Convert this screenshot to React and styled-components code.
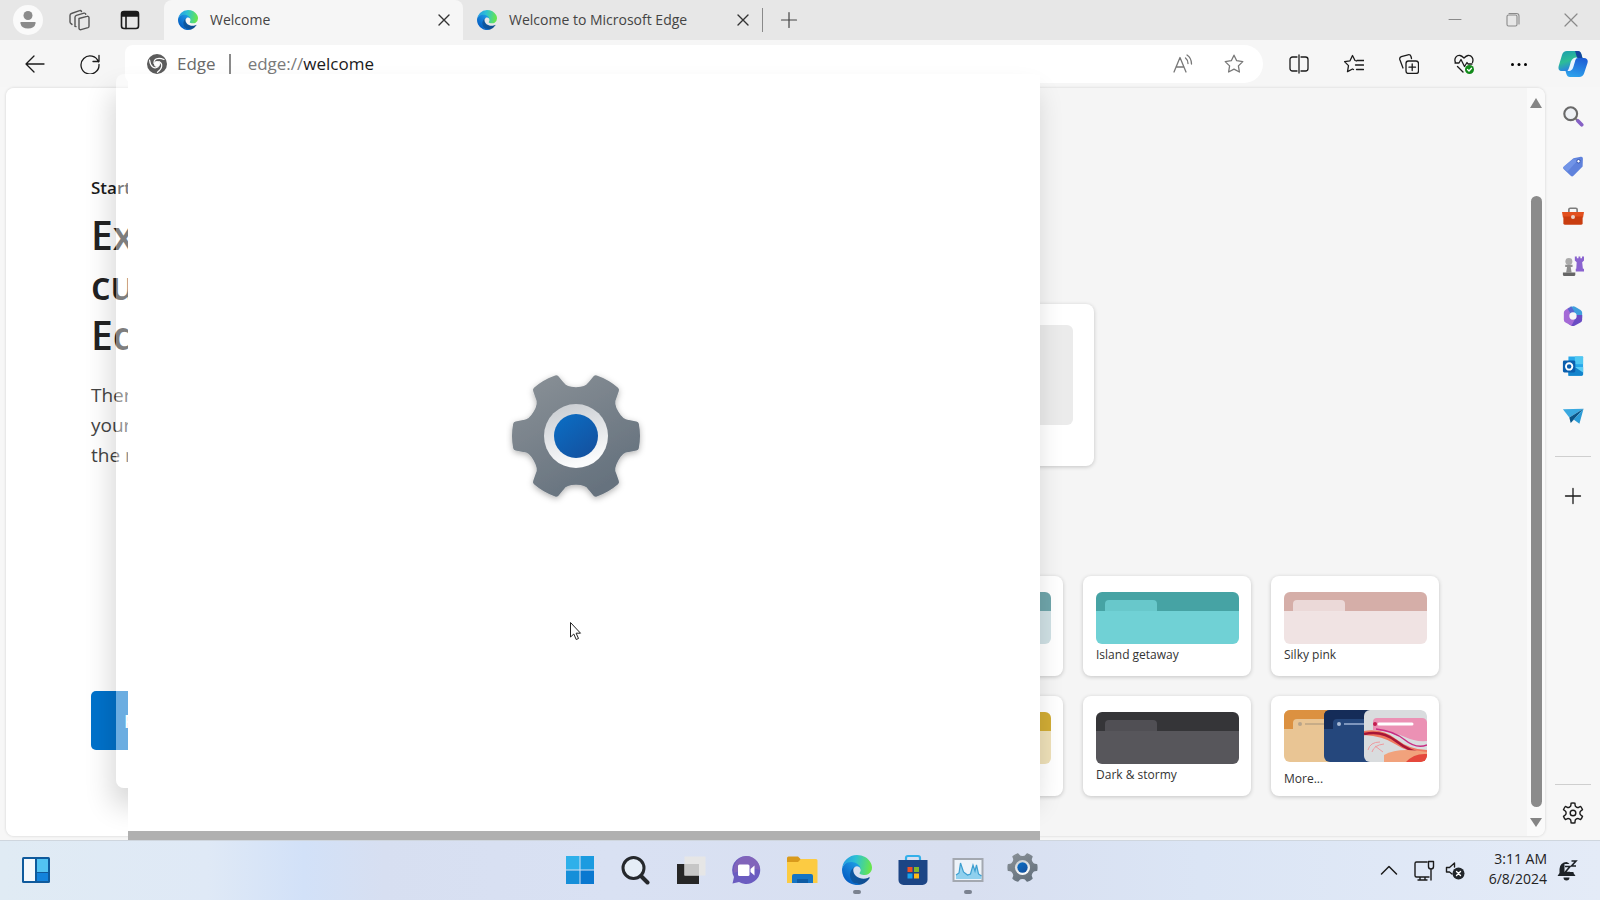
import React, { useId } from "react";
import styled, { createGlobalStyle, css } from "styled-components";

const GlobalStyle = createGlobalStyle`
  *, *::before, *::after { box-sizing: border-box; }
  body { margin: 0; background: #f7f7f7; }
  body, button, input { font-family: "Open Sans", "Noto Sans", sans-serif; }
  button { padding: 0; border: 0; background: none; color: inherit; }
  h1, p { margin: 0; }
`;

/* ---------- shell ---------- */

const Desktop = styled.div`
  position: relative;
  display: flex;
  flex-direction: column;
  min-height: 100vh;
  overflow: hidden;
  color: #1b1b1b;
`;

const IconButton = styled.button`
  display: flex;
  align-items: center;
  justify-content: center;
  flex: none;
  width: ${(p) => p.$w || 55}px;
  height: ${(p) => p.$h || 40}px;
  color: ${(p) => p.$color || "#1b1b1b"};
`;

/* ---------- tab strip ---------- */

const TabStrip = styled.header`
  display: flex;
  align-items: center;
  height: 40px;
  padding-left: 2px;
  background: #e7e7e7;
`;

const Avatar = styled.span`
  display: flex;
  align-items: center;
  justify-content: center;
  width: 30px;
  height: 30px;
  border-radius: 50%;
  background: #fafafa;
`;

const Tabs = styled.nav`
  display: flex;
  align-items: center;
  height: 100%;
  margin-left: 9px;
`;

const Tab = styled.div`
  display: flex;
  align-items: center;
  gap: 12px;
  width: 299px;
  height: 100%;
  padding: 0 7px 0 14px;
  border-radius: 8px 8px 0 0;
  ${(p) => p.$active && css`background: #f6f6f6;`}
`;

const TabTitle = styled.span`
  flex: 1;
  font-size: 14px;
  line-height: 20px;
  white-space: nowrap;
  color: #444;
`;

const TabDivider = styled.span`
  width: 1px;
  height: 24px;
  background: #8a8a8a;
`;

const WindowControls = styled.div`
  display: flex;
  margin-left: auto;
`;

/* ---------- toolbar ---------- */

const Toolbar = styled.div`
  display: flex;
  align-items: center;
  height: 47px;
  padding-left: 7px;
  background: #f6f6f6;
`;

const AddressBar = styled.div`
  display: flex;
  align-items: center;
  flex: 1;
  height: 38px;
  margin: 0 8px;
  padding: 0 4px 0 22px;
  border-radius: 8px 19px 19px 8px;
  background: #fff;
`;

const SiteName = styled.span`
  margin-left: 10px;
  padding-right: 13px;
  border-right: 2px solid #8a8a8a;
  font-size: 17px;
  line-height: 20px;
  color: #6a6a6a;
`;

const Address = styled.span`
  flex: 1;
  margin-left: 17px;
  font-size: 17px;
  line-height: 24px;
  color: #7a7a7a;
  b { font-weight: 400; color: #1b1b1b; }
`;

/* ---------- page ---------- */

const Main = styled.main`
  display: flex;
  flex: 1;
  background: #f7f7f7;
`;

const Page = styled.section`
  display: flex;
  flex: 1;
  margin: 1px 0 4px 6px;
  overflow: hidden;
  border-radius: 8px;
  background: #f5f5f5;
  box-shadow: 0 0 3px rgba(0, 0, 0, 0.16);
`;

const Intro = styled.div`
  width: 40%;
  padding: 88px 0 0 85px;
  background: #fff;
`;

const Eyebrow = styled.p`
  font-size: 17px;
  font-weight: 600;
  line-height: 24px;
`;

const Heading = styled.h1`
  margin-top: 10px;
  font-size: 39px;
  font-weight: 600;
  line-height: 50px;
  color: #222;
`;

const Copy = styled.p`
  margin-top: 20px;
  font-size: 19px;
  line-height: 30px;
  color: #444;
`;

const PrimaryButton = styled.button`
  display: block;
  width: 200px;
  height: 59px;
  margin-top: 221px;
  padding-left: 33px;
  border-radius: 5px;
  background: #0072cb;
  color: #fff;
  font-size: 18px;
  font-weight: 600;
  text-align: left;
`;

const Options = styled.div`
  display: flex;
  flex: 1;
  flex-direction: column;
  align-items: flex-end;
  padding: 216px 88px 40px 0;
`;

const OptionGrid = styled.div`
  display: grid;
  grid-template-columns: repeat(3, 168px);
  gap: 20px;
`;

const Card = styled.div`
  border-radius: 8px;
  background: #fff;
  box-shadow: 0 1px 4px rgba(0, 0, 0, 0.2);
`;

const LayoutCard = styled(Card)`
  grid-column: 1 / -1;
  justify-self: start;
  width: 199px;
  height: 162px;
  margin-bottom: 90px;
  padding: 21px;
`;

const LayoutPreview = styled.div`
  height: 100px;
  border-radius: 6px;
  background: #ebebeb;
`;

const ThemeCard = styled(Card)`
  display: flex;
  flex-direction: column;
  height: 100px;
  padding: ${(p) => (p.$more ? 14 : 16)}px 12px 0 13px;
`;

const ThemeName = styled.span`
  margin-top: ${(p) => (p.$more ? 7 : 1)}px;
  font-size: 12px;
  line-height: 20px;
  color: #333;
`;

const Swatch = styled.div`
  position: relative;
  height: 52px;
  overflow: hidden;
  border-radius: 6px;
  background: linear-gradient(${(p) => p.$dark} 19px, ${(p) => p.$light} 19px);
  &::before {
    content: "";
    position: absolute;
    top: 8px;
    left: 9px;
    width: 52px;
    height: 12px;
    border-radius: 4px 4px 0 0;
    background: ${(p) => p.$light};
    opacity: 0.8;
  }
`;

const Scrollbar = styled.div`
  display: flex;
  flex-direction: column;
  align-items: center;
  width: 18px;
  padding: 10px 0 9px;
  background: #fafafa;
`;

const Thumb = styled.div`
  flex: 1;
  width: 11px;
  margin: 88px 0 11px;
  border-radius: 6px;
  background: #8b8b8b;
`;

const Arrow = styled.span`
  border: 6px solid transparent;
  ${(p) => (p.$up ? css`border-top: 0; border-bottom: 10px solid #858585;` : css`border-bottom: 0; border-top: 9px solid #858585;`)}
`;

const Sidebar = styled.aside`
  display: flex;
  flex-direction: column;
  align-items: center;
  width: 55px;
  padding: 4px 0 2px;
`;

const SideDivider = styled.span`
  width: 36px;
  height: 1px;
  margin: ${(p) => (p.$last ? "auto 0 3px" : "15px 0 14px")};
  background: #cfcfcf;
`;

/* ---------- windows opening over the browser ---------- */

const GhostWindow = styled.div`
  position: absolute;
  top: 74px;
  left: 116px;
  width: 924px;
  height: 714px;
  border-radius: 8px;
  background: rgba(255, 255, 255, 0.42);
  box-shadow: -4px 18px 28px rgba(0, 0, 0, 0.16);
`;

const SplashWindow = styled.div`
  position: absolute;
  top: 75px;
  left: 128px;
  width: 912px;
  height: 765px;
  display: flex;
  justify-content: center;
  padding-top: 291px;
  border-bottom: 9px solid #b0b0b0;
  background: #fff;
`;

const SplashIcon = styled.div`
  height: 140px;
  margin-right: 16px;
`;

const Pointer = styled.svg`
  position: absolute;
  top: 621px;
  left: 569px;
`;

/* ---------- taskbar ---------- */

const Taskbar = styled.footer`
  position: relative;
  display: grid;
  grid-template-columns: 1fr 496px 1fr;
  align-items: center;
  height: 60px;
  box-shadow: inset 0 1px #cfd6de;
  background: linear-gradient(90deg, #e0ebf4 0%, #dfe9f6 13%, #d2e1f8 19%, #d7dff1 24%, #d9e1f3 38%, #d8dff0 60%, #dbe5f5 75%, #e4ebf7 100%);
`;

const Apps = styled.div`
  display: flex;
`;

const AppButton = styled.button`
  position: relative;
  display: flex;
  align-items: center;
  justify-content: center;
  flex: ${(p) => (p.$opening ? "0 0 52px" : "1")};
  height: 48px;
  padding-bottom: ${(p) => (p.$opening ? 6 : 0)}px;
  ${(p) => p.$running && css`
    &::after {
      content: "";
      position: absolute;
      bottom: 0;
      width: 8px;
      height: 4px;
      border-radius: 2px;
      background: #7b8290;
    }
  `}
`;

const Tray = styled.div`
  display: flex;
  align-items: center;
  justify-content: flex-end;
  padding-right: 20px;
`;

const Clock = styled.time`
  margin: 0 7px 2px 20px;
  font-size: 14px;
  line-height: 20px;
  text-align: right;
  white-space: pre-line;
  color: #222;
`;

/* ---------- icons ---------- */

function Line({ size = 20, w = 1.3, box = 20, children, ...rest }) {
  return (
    <svg width={size} height={size} viewBox={`0 0 ${box} ${box}`} fill="none" stroke="currentColor" strokeWidth={w} strokeLinecap="round" strokeLinejoin="round" aria-hidden="true" {...rest}>
      {children}
    </svg>
  );
}

function Art({ size = 22, box = 24, children }) {
  return <svg width={size} height={size} viewBox={`0 0 ${box} ${box}`} aria-hidden="true">{children}</svg>;
}

const polar = (r, deg) => {
  const a = (deg * Math.PI) / 180;
  return `${(r * Math.cos(a)).toFixed(2)} ${(r * Math.sin(a)).toFixed(2)}`;
};

function gearPath(teeth, half, outer, shoulder, inner) {
  const step = 360 / teeth;
  let d = "";
  for (let i = 0; i < teeth; i++) {
    const a = i * step;
    const end = a + step;
    d += `${i ? "L" : "M"}${polar(outer, a - half)}A${outer} ${outer} 0 0 1 ${polar(outer, a + half)}`;
    d += `L${polar(shoulder, a + half + 3)}C${polar(inner, a + half + 6)} ${polar(inner, end - half - 6)} ${polar(shoulder, end - half - 3)}`;
  }
  return d + "Z";
}

function SettingsGear({ size, shadow }) {
  const id = useId();
  return (
    <svg width={size} height={size} viewBox="-70 -70 140 140" aria-hidden="true">
      <defs>
        <linearGradient id={id + "g"} x1="0" y1="0" x2=".6" y2="1"><stop stopColor="#8a9197" /><stop offset="1" stopColor="#66727e" /></linearGradient>
        <linearGradient id={id + "r"} x1="0" y1="0" x2=".3" y2="1"><stop stopColor="#c5c9ce" /><stop offset="1" stopColor="#fafbfc" /></linearGradient>
        <linearGradient id={id + "b"} x1="0" y1="0" x2=".8" y2="1"><stop stopColor="#0a6fc6" /><stop offset="1" stopColor="#14519f" /></linearGradient>
        <filter id={id + "s"} x="-20%" y="-20%" width="140%" height="140%"><feDropShadow dx="0" dy="2" stdDeviation="3" floodOpacity=".3" /></filter>
      </defs>
      <path d={gearPath(6, 11, 61, 54, 45)} fill={`url(#${id}g)`} stroke={`url(#${id}g)`} strokeWidth="6" strokeLinejoin="round" filter={shadow ? `url(#${id}s)` : undefined} />
      <circle r="32" fill={`url(#${id}r)`} />
      <circle r="22" fill={`url(#${id}b)`} />
    </svg>
  );
}

function EdgeLogo({ size = 20 }) {
  const id = useId();
  return (
    <svg width={size} height={size} viewBox="0 0 256 256" aria-hidden="true">
      <defs>
        <linearGradient id={id + "a"} x1="63" y1="177" x2="241" y2="177" gradientUnits="userSpaceOnUse"><stop stopColor="#0c59a4" /><stop offset="1" stopColor="#114a8b" /></linearGradient>
        <linearGradient id={id + "b"} x1="157" y1="99" x2="46" y2="221" gradientUnits="userSpaceOnUse"><stop stopColor="#1b9de2" /><stop offset=".4" stopColor="#1681d8" /><stop offset="1" stopColor="#0560c4" /></linearGradient>
        <linearGradient id={id + "c"} x1="20" y1="60" x2="240" y2="100" gradientUnits="userSpaceOnUse"><stop stopColor="#259fe0" /><stop offset=".4" stopColor="#2dc0d5" /><stop offset=".75" stopColor="#4bd68c" /><stop offset="1" stopColor="#66e450" /></linearGradient>
      </defs>
      <path fill={`url(#${id}a)`} d="M231 190.5c-3.4 1.8-6.9 3.4-10.5 4.7a101.9 101.9 0 01-35.9 6.4c-47.3 0-88.5-32.5-88.5-74.3 0-11.5 6.4-21.9 16.4-27.3-42.8 1.8-53.8 46.4-53.8 72.5 0 74 68.1 81.4 82.8 81.4 7.9 0 19.8-2.3 27-4.6l1.3-.4a128.3 128.3 0 0066.6-52.8 4 4 0 00-5.4-5.6z" />
      <path fill={`url(#${id}b)`} d="M105.7 241.4A79.2 79.2 0 0183 220.1a80.7 80.7 0 0129.5-120c3.2-1.5 8.5-4.1 15.6-4a32.4 32.4 0 0125.7 13 31.9 31.9 0 016.3 18.7c0-.2 24.5-79.6-80-79.6-43.9 0-80 41.6-80 78.2a130.2 130.2 0 0012.1 56 128 128 0 00156.4 67 75.5 75.5 0 01-42.9-8z" />
      <path fill={`url(#${id}c)`} d="M152.3 148.9c-.9 1-3.4 2.5-3.4 5.6 0 2.6 1.7 5.2 4.8 7.3 14.3 10 41.4 8.6 41.5 8.6a59.6 59.6 0 0030.3-8.3A61.4 61.4 0 00256 109c.3-22.4-8-37.3-11.3-43.9C223.5 23.9 177.7 0 128 0A128 128 0 000 126.2c.5-36.5 36.8-66 80-66 3.5 0 23.5.3 42 10 16.3 8.6 24.9 19 30.8 29.2 6.2 10.7 7.3 24.1 7.3 29.5 0 5.3-2.7 13.3-7.8 20z" />
    </svg>
  );
}

const Cross = ({ size = 20, w = 1.4 }) => <Line size={size} w={w}><path d="M5 5l10 10M15 5L5 15" /></Line>;
const Plus = ({ w = 1.2 }) => <Line w={w}><path d="M10 2.500v15M2.500 10h15" /></Line>;

const PageSwirl = () => (
  <Art size={20} box={20}>
    <circle cx="10" cy="10" r="10" fill="#5c5c5c" />
    {[0, 120, 240].map((a) => (
      <path key={a} transform={`rotate(${a} 10 10)`} d="M7 9.500C6.600 5 11 2.800 17 5.500" fill="none" stroke="#fff" strokeWidth="1.200" strokeLinecap="round" />
    ))}
    <circle cx="10" cy="10" r="3" fill="#fff" />
  </Art>
);

const starPath = "M10 1.200l2.700 5.500 6.100.9-4.400 4.300 1 6.100-5.400-2.900L4.600 18l1-6.100L1.200 7.600l6.100-.9z";

const Workspaces = () => (
  <Line size={22} box={22} w={1.4}>
    <path d="M11 9.500l8-2.200a1.500 1.500 0 012 1.400v8.600a1.500 1.500 0 01-1 1.400l-7 2a1.500 1.500 0 01-2-1.400z" />
    <path d="M8 17.600l-1-.2V8.200a2 2 0 011.400-1.900l7.600-2.100a1.500 1.500 0 011.800 1" />
    <path d="M4 15.400l-1-.8a2 2 0 01-1-1.600V6.400a2 2 0 011.400-1.900l8.200-2.800a1.500 1.500 0 011.900.8" />
  </Line>
);

const TabActions = () => (
  <Line w={1.600}>
    <rect x="1.500" y="1.500" width="17" height="17" rx="2.500" />
    <path d="M2 2.500h16v3.500H2z" fill="currentColor" />
    <path d="M6 6.500v12" />
  </Line>
);

const Copilot = () => {
  const id = useId();
  return (
    <svg width="30" height="28" viewBox="0 0 30 28" aria-hidden="true">
      <defs>
        <linearGradient id={id + "l"} x1="0" y1="0" x2=".4" y2="1"><stop stopColor="#1a9bb0" /><stop offset=".55" stopColor="#2dbd96" /><stop offset="1" stopColor="#2a7de8" /></linearGradient>
        <linearGradient id={id + "r"} x1=".6" y1="0" x2=".3" y2="1"><stop stopColor="#1c5fd6" /><stop offset="1" stopColor="#2ea3ec" /></linearGradient>
      </defs>
      <path d="M9 1h10c3 0 4 2 4.600 4l.9 3h-4c-3 0-4 1.500-5 4l-2 6c-.8 2-2 3-4 3H4c-3 0-4-2-3.300-5L4 5c.8-2.600 2.500-4 5-4z" fill={`url(#${id}l)`} />
      <path d="M17 1h3c2 0 3 1.500 3.500 3.500l1 3.500h-5c-1.500-2-1.500-5-2.500-7z" fill="#14459f" />
      <path d="M20.500 8H26c3 0 4.300 2 3.500 5l-3.300 10c-.8 2.600-2.500 4-5 4H12c-2 0-3-1.200-3.600-3L7.500 21H10c2.500 0 3.500-1.500 4.300-4l1.700-5c.9-2.500 2-4 4.500-4z" fill={`url(#${id}r)`} />
      <path d="M19.500 7.500c-4.500 0-6 2-7 5.500-.8 2.500-1.200 5.500-3 8 4 .2 5-1.500 6-4.500l1.500-5c.5-2 1-3.500 2.500-4z" fill="#e8f5ff" />
    </svg>
  );
};

const sideApps = [
  ["Search", <Art><circle cx="9.500" cy="9.500" r="7" fill="#eef1f5" stroke="#696969" strokeWidth="2.300" /><path d="M15 15l2.500 2.500" stroke="#777" strokeWidth="2.500" /><path d="M17.500 17.500l4 4" stroke="#8661c5" strokeWidth="4" strokeLinecap="round" /></Art>],
  ["Shopping", <Art><path d="M12.500 3.500L20.500 2a2 2 0 012.300 2l-.3 8.500L12.500 22.500a2 2 0 01-3 0l-7.500-7a2 2 0 010-3z" fill="#5f82dc" /><path d="M2 12.500l10-8 6 .5-12 13-4-3.500z" fill="#7da0ee" opacity=".6" /><circle cx="18" cy="6.800" r="1.900" fill="#fff" stroke="#2d4ba8" /></Art>],
  ["Tools", <Art><path d="M7.500 8V5a1.500 1.500 0 011.500-1.500h6A1.500 1.500 0 0116.500 5v3" fill="none" stroke="#7c7c7c" strokeWidth="1.800" /><path d="M0 7.500h24l-1 6H1z" fill="#e2501f" /><path d="M1.500 12.500h21V20a1.500 1.500 0 01-1.500 1.500H3A1.500 1.500 0 011.500 20z" fill="#c93d10" /><circle cx="12" cy="13" r="2.200" fill="#e9d2c8" /></Art>],
  ["Games", <Art><path d="M14 1.500h2.200v2H18v-2h2v2h1.800v-2H24V6l-2 2 .8 7H24v3h-9v-3h.6L16 8l-2-2z" fill="#8a63cf" /><circle cx="7.500" cy="7" r="3.800" fill="#ababab" /><path d="M3.500 10.500h8v2.500h-2l1 6h-6l1-6h-2z" fill="#8e8e8e" /><path d="M1 19h13.500v2.500a1.500 1.500 0 01-1.500 1.500H2.500A1.500 1.500 0 011 21.500z" fill="#666" /></Art>],
  ["Microsoft 365", (
    <Art>
      <g fill="none" strokeWidth="7" strokeLinejoin="round">
        <path d="M9 5.500L12.500 5l6 3.500V14" stroke="#3f9fdd" />
        <path d="M18.500 11v5L12 19.500l-3.500-2" stroke="#6a4cc4" />
        <path d="M12 19.500L5.500 16V8.500L10 5.500" stroke="#a46ad6" />
        <path d="M8 7l4-2.300" stroke="#5b66cf" />
      </g>
      <circle cx="12" cy="12" r="4" fill="#f7f7f7" />
    </Art>
  )],
  ["Outlook", <Art><path d="M7 1.500h15a1 1 0 011 1v18a2 2 0 01-2 2H7z" fill="#28a8ea" /><path d="M14 1.500h9V10h-9z" fill="#50c8f2" /><path d="M7 14l16-1v8a1.500 1.500 0 01-1.500 1.500H7z" fill="#1484cc" /><path d="M14 13l9 6v-6z" fill="#5bcdf5" /><rect x="1" y="6" width="13.500" height="13" rx="1.500" fill="#0b5fae" /><circle cx="7.800" cy="12.500" r="3.500" fill="none" stroke="#fff" strokeWidth="2" /></Art>],
  ["Drop", <Art><path d="M1 4.500L23.500 4 8 13.500z" fill="#3aa9e0" /><path d="M23.500 4L8 13.500l1.500 6z" fill="#0a5487" /><path d="M23.500 4l-14 15.500L13 16l6 4.500z" fill="#2b9bd6" /></Art>],
];

const taskApps = [
  { name: "Start", art: <Art size={30} box={30}><path d="M1 1h13.500v13.500H1z" fill="#2fb0ea" /><path d="M15.500 1H29v13.500H15.500z" fill="#1b9be0" /><path d="M1 15.500h13.500V29H1z" fill="#168fd9" /><path d="M15.500 15.500H29V29H15.500z" fill="#0a78d0" /></Art> },
  { name: "Search", art: <Art size={30} box={30}><circle cx="13.500" cy="13" r="10.500" fill="#e5edf6" stroke="#25282c" strokeWidth="3" /><path d="M21 21l6.500 6.500" stroke="#25282c" strokeWidth="4" strokeLinecap="round" /></Art> },
  { name: "Task view", art: <Art size={30} box={30}><path d="M1 9h22v20H1z" fill="#262626" /><path d="M8.500 1.500h21v19h-21z" fill="#e6e6e6" /><path d="M8.500 9H23v11.500H8.500z" fill="#c6c6c6" /></Art> },
  { name: "Chat", art: <Art size={30} box={30}><path d="M15 1a14 14 0 11-7 26l-6.500 1.500L3 22A14 14 0 0115 1z" fill="#6b5cc0" /><path d="M15 1a14 14 0 0114 14c-7-2-14-2-26 3A14 14 0 0115 1z" fill="#8a68b8" opacity=".7" /><rect x="7" y="9.500" width="11.500" height="11.500" rx="1.500" fill="#fff" /><path d="M19.500 14l4-3.500v10l-4-3.500z" fill="#fff" /></Art> },
  { name: "File Explorer", art: <Art size={32} box={32}><path d="M1 4a1.500 1.500 0 011.500-1.500H12l3 3L12 9H1z" fill="#d99a1c" /><path d="M1 8h11l3-3h15a1.500 1.500 0 011.500 1.500V29H1z" fill="#fccb42" /><path d="M6 29v-7a2 2 0 012-2h17a2 2 0 012 2v7z" fill="#1574c4" /><path d="M11 29v-4h11v4z" fill="#0e5ba4" /></Art> },
  { name: "Microsoft Edge", running: true, art: <EdgeLogo size={30} /> },
  { name: "Microsoft Store", art: <Art size={32} box={32}><path d="M9 7V4a2 2 0 012-2h10a2 2 0 012 2v3" fill="none" stroke="#34b0ea" strokeWidth="2.200" /><path d="M1.500 6h29v20a5 5 0 01-5 5h-19a5 5 0 01-5-5z" fill="#1c4585" /><path d="M10.500 13h5v5h-5z" fill="#f05125" /><path d="M17 13h5v5h-5z" fill="#80b82a" /><path d="M10.500 19.500h5v5h-5z" fill="#17a4ee" /><path d="M17 19.500h5v5h-5z" fill="#fbb917" /></Art> },
  { name: "Task Manager", running: true, art: <Art size={32} box={32}><rect x="1.500" y="5" width="29" height="22" fill="#edf3f9" stroke="#a3a8b0" strokeWidth="2" /><path d="M4 25v-4l3-2 1.500-10 3 9 4 3 3-1 2.500-9 2 6 1.500-6 2 9 3 2v3z" fill="#8fd0ee" /><path d="M4 21l3-2 1.500-10 3 9 4 3 3-1 2.500-9 2 6 1.500-6 2 9 3 2" fill="none" stroke="#3c9fd0" strokeWidth="1.200" /></Art> },
  { name: "Settings", opening: true, art: <SettingsGear size={33} /> },
];

const themes = [
  { name: "", dark: "#6fa5aa", light: "#cfe0e4" },
  { name: "Island getaway", dark: "#46a3a4", light: "#70d1d5" },
  { name: "Silky pink", dark: "#d5aea8", light: "#f0e3e3" },
  { name: "", dark: "#d1ac35", light: "#eee0b8" },
  { name: "Dark & stormy", dark: "#353538", light: "#57565b" },
];

const MoreThemes = () => (
  <svg width="143" height="52" viewBox="0 0 143 52" aria-hidden="true">
    <defs>
      <clipPath id="more-clip"><rect width="143" height="52" rx="6" /></clipPath>
      <clipPath id="art-clip"><rect x="80" width="63" height="52" rx="6" /></clipPath>
    </defs>
    <g clipPath="url(#more-clip)">
      <path d="M0 0h60v52H0z" fill="#e9c594" /><path d="M0 0h50v9H13q-4 0-4 4v6H0z" fill="#dc9140" />
      <circle cx="16" cy="14" r="2" fill="#b8a48a" /><path d="M21 14h19" stroke="#c7ac87" strokeWidth="2" />
      <rect x="40" width="60" height="52" rx="6" fill="#25477c" /><path d="M46 0h45v9H53q-4 0-4 4v6h-9V6q0-6 6-6z" fill="#152c58" />
      <circle cx="55" cy="14" r="2" fill="#a9bad5" /><path d="M60 14h20" stroke="#7e96bd" strokeWidth="2" />
      <g clipPath="url(#art-clip)">
        <path d="M80 0h63v52H80z" fill="#d9dcde" />
        <path d="M89 20v-8q0-4 4-4h45q4 0 5 4v19q-12 1-22-4t-32-7z" fill="#eb91b4" />
        <path d="M95 14h33" stroke="#fff" strokeWidth="3" strokeLinecap="round" /><circle cx="91" cy="14" r="2" fill="#c21d4e" />
        <path d="M80 21q18-3 32 8t31 11v5q-20-3-32-11t-31-9z" fill="#f0785f" />
        <path d="M80 24q18-4 32 7t31 14" fill="none" stroke="#a71638" strokeWidth="2.500" />
        <path d="M92 19q18 2 29 11t22 5" fill="none" stroke="#c92c83" strokeWidth="1.500" />
        <path d="M84 40q2-8 12-8M88 42q2-7 12-8M91 36l8 6" fill="none" stroke="#ef9a9e" />
        <path d="M100 45q14-8 43-3v10h-43z" fill="#f1a27c" /><path d="M122 52q8-9 21-8v8z" fill="#e5483c" />
      </g>
    </g>
  </svg>
);

/* ---------- app ---------- */

export default function App() {
  return (
    <Desktop>
      <GlobalStyle />
      <TabStrip>
        <IconButton $w={51} aria-label="Profile"><Avatar><Art size={18} box={18}><circle cx="9" cy="4.500" r="4.500" fill="#8b8b8b" /><path d="M1.500 11h15v1.500Q15.500 17.500 9 17.500T1.500 12.500z" fill="#8b8b8b" /></Art></Avatar></IconButton>
        <IconButton $w={51} $color="#555" aria-label="Workspaces"><Workspaces /></IconButton>
        <IconButton $w={51} aria-label="Tab actions"><TabActions /></IconButton>
        <Tabs>
          <Tab $active><EdgeLogo /><TabTitle>Welcome</TabTitle><IconButton $w={24} $h={24} aria-label="Close tab" $color="#333"><Cross /></IconButton></Tab>
          <Tab><EdgeLogo /><TabTitle>Welcome to Microsoft Edge</TabTitle><IconButton $w={24} $h={24} aria-label="Close tab" $color="#333"><Cross /></IconButton></Tab>
          <TabDivider />
          <IconButton $w={52} aria-label="New tab" $color="#444"><Plus /></IconButton>
        </Tabs>
        <WindowControls>
          <IconButton $w={58} $color="#8a8a8a" aria-label="Minimize"><Line w={1}><path d="M4 9.500h12" /></Line></IconButton>
          <IconButton $w={58} $color="#8a8a8a" aria-label="Restore"><Line w={1.100}><rect x="4" y="5" width="10" height="11" rx="1.500" /><path d="M6 3.500h7.500A2.500 2.500 0 0116 6V14" /></Line></IconButton>
          <IconButton $w={58} $color="#8a8a8a" aria-label="Close"><Line w={1.200}><path d="M4 4l12 12M16 4L4 16" /></Line></IconButton>
        </WindowControls>
      </TabStrip>

      <Toolbar>
        <IconButton aria-label="Back"><Line><path d="M19 10H1M9 2L1 10l8 8" /></Line></IconButton>
        <IconButton aria-label="Refresh"><Line><path d="M18.500 8A9 9 0 1019 10.500M19 1.500v6h-6" /></Line></IconButton>
        <AddressBar>
          <PageSwirl />
          <SiteName>Edge</SiteName>
          <Address>edge://<b>welcome</b></Address>
          <IconButton $w={50} $color="#777" aria-label="Read aloud"><Line><path d="M1 18L7 3.500 13 18M3 13h8M12.500 4q2.500 2 2.500 5.500M14 1q4.500 3 4.500 9" /></Line></IconButton>
          <IconButton $w={51} $color="#777" aria-label="Favorite this page"><Line><path d={starPath} /></Line></IconButton>
        </AddressBar>
        <IconButton aria-label="Split screen"><Line><path d="M8 3H3.500A2.500 2.500 0 001 5.500v9A2.500 2.500 0 003.500 17H8M12 3h4.500A2.500 2.500 0 0119 5.500v9a2.500 2.500 0 01-2.500 2.500H12M10 1v18" /></Line></IconButton>
        <IconButton aria-label="Favorites"><Line><path d="M12.500 7L11 6.500 8.500 1.500 6 6.800l-5.500.8 4 4-1 6L8.500 15l1 .5M13 6.500h7M11.500 11h8M12.500 15.500h7" /></Line></IconButton>
        <IconButton aria-label="Collections"><Line><rect x="7" y="7" width="12.500" height="12.500" rx="2.500" /><path d="M13.200 10v6.500M10 13.200h6.500M4 14L.8 5.500A2.500 2.500 0 012.300 2.600L9 .8a2.500 2.500 0 013 1.700l.5 2" /></Line></IconButton>
        <IconButton aria-label="Browser essentials">
          <Line><path d="M1.500 8.500C-.5 4 3 1 6 1.500c2 .3 3 1.500 4 2.500 1-1 2-2.200 4-2.500 3.500-.5 6 3 4.500 7M1 9h4l2-3.500 3.500 7 2.500-4 1 1.500h4M3.500 12.500L9 18" /><circle cx="15.500" cy="15.500" r="4.500" fill="#128a1a" stroke="none" /><path d="M13.500 15.500l1.500 1.500 2.500-2.800" stroke="#fff" /></Line>
        </IconButton>
        <IconButton aria-label="Settings and more"><Art size={20} box={20}><circle cx="3.500" cy="10.500" r="1.500" /><circle cx="10" cy="10.500" r="1.500" /><circle cx="16.500" cy="10.500" r="1.500" /></Art></IconButton>
        <IconButton $w={54} aria-label="Copilot"><Copilot /></IconButton>
      </Toolbar>

      <Main>
        <Page>
          <Intro>
            <Eyebrow>Start</Eyebrow>
            <Heading>Ex<br />cu<br />Ed</Heading>
            <Copy>There<br />your<br />the n</Copy>
            <PrimaryButton>F</PrimaryButton>
          </Intro>
          <Options>
            <OptionGrid>
              <LayoutCard><LayoutPreview /></LayoutCard>
              {themes.map((t, i) => (
                <ThemeCard key={i}>
                  <Swatch $dark={t.dark} $light={t.light} />
                  {t.name && <ThemeName>{t.name}</ThemeName>}
                </ThemeCard>
              ))}
              <ThemeCard $more><MoreThemes /><ThemeName $more>More...</ThemeName></ThemeCard>
            </OptionGrid>
          </Options>
          <Scrollbar><Arrow $up /><Thumb /><Arrow /></Scrollbar>
        </Page>
        <Sidebar>
          {sideApps.map(([name, art]) => <IconButton key={name} $h={50} aria-label={name}>{art}</IconButton>)}
          <SideDivider />
          <IconButton $h={50} aria-label="Customize sidebar"><Plus w={1.300} /></IconButton>
          <SideDivider $last />
          <IconButton $h={50} aria-label="Settings">
            <svg width="22" height="22" viewBox="-70 -70 140 140" fill="none" stroke="currentColor" strokeWidth="9" strokeLinejoin="round" aria-hidden="true"><path transform="rotate(30)" d={gearPath(6, 11, 64, 54, 42)} /><circle r="18" /></svg>
          </IconButton>
        </Sidebar>
      </Main>

      <GhostWindow />
      <SplashWindow><SplashIcon><SettingsGear size={140} shadow /></SplashIcon></SplashWindow>
      <Pointer width="13" height="20" viewBox="0 0 13 20" aria-hidden="true"><path d="M1.500 1.500v14.500l3.300-3 2.400 5.500 2.300-1-2.400-5.300h4.400z" fill="#fff" stroke="#222" strokeLinejoin="round" /></Pointer>

      <Taskbar>
        <IconButton $w={72} aria-label="Widgets"><Art size={30} box={30}><rect x="1" y="2" width="28" height="26" rx="1.500" fill="#0f5a9c" /><path d="M3 4h11v22H3z" fill="#f4f8fc" /><path d="M16 4h11v13H16z" fill="#52c3f2" /><path d="M16 18h11v8H16z" fill="#1383dc" /></Art></IconButton>
        <Apps>
          {taskApps.map((a) => (
            <AppButton key={a.name} $running={a.running} $opening={a.opening} aria-label={a.name}>{a.art}</AppButton>
          ))}
        </Apps>
        <Tray>
          <IconButton $w={36} aria-label="Show hidden icons"><Line w={1.500}><path d="M2.500 14L10 6.500l7.500 7.500" /></Line></IconButton>
          <IconButton $w={34} aria-label="Network"><Line size={22} box={22} w={1.400}><path d="M14 3H3.500A1.500 1.500 0 002 4.500v12A1.500 1.500 0 003.500 18H16M7 18v3M12 18v3M5 21h9M15.500 2.500h5v5a2.500 2.500 0 01-5 0zM18 10v11" /></Line></IconButton>
          <IconButton $w={28} aria-label="Volume muted"><Line w={1.400}><path d="M7 14L4.500 12H1.500V7.500h3L9.500 3v4" /><circle cx="13.500" cy="13.500" r="6" fill="#22262b" stroke="none" /><path d="M11.500 11.500l4 4M15.500 11.500l-4 4" stroke="#fff" /></Line></IconButton>
          <Clock>{"3:11 AM\n6/8/2024"}</Clock>
          <IconButton $w={26} aria-label="Notifications"><Art size={22} box={22}><path d="M10.500 3a7 7 0 00-7 7v4L1.500 17h18l-2-3v-1h-9V5h5A7 7 0 0010.500 3zM7.500 18.500h6a3 3 0 01-6 0z" fill="#1d2227" /><path d="M9 7.500h5l-5 6h5M15.500 2h4.500l-4.500 5h4.500" fill="none" stroke="#1d2227" strokeWidth="1.600" /></Art></IconButton>
        </Tray>
      </Taskbar>
    </Desktop>
  );
}
